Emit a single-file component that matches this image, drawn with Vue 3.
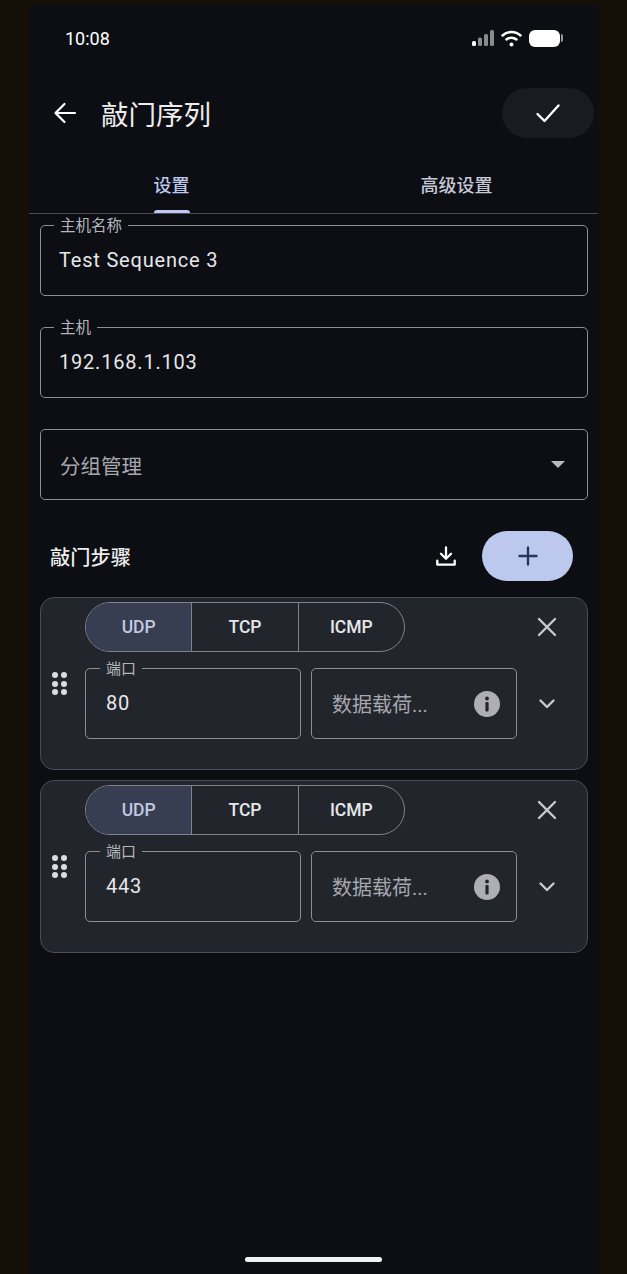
<script setup>
const steps = [
  { port: '80' },
  { port: '443' },
]
const protocols = ['UDP', 'TCP', 'ICMP']
</script>

<template>
  <div class="outer">
    <main class="screen">
      <div class="status">
        <span class="time">10:08</span>
        <div class="status-icons">
          <svg width="22" height="16" viewBox="0 0 22 16">
            <rect x="0" y="11" width="4" height="5" rx="1.500" fill="#fff" />
            <rect x="6" y="7.500" width="4" height="8.500" rx="1.500" fill="#8a8a8c" />
            <rect x="12" y="4" width="4" height="12" rx="1.500" fill="#8a8a8c" />
            <rect x="18" y="0" width="4" height="16" rx="1.500" fill="#8a8a8c" />
          </svg>
          <svg width="21" height="17" viewBox="0 0 21 17" fill="none" stroke="#fff" stroke-width="2.500" stroke-linecap="round">
            <path d="M1.500 5.500C6.500 .8 14.500 .8 19.500 5.500" />
            <path d="M5.500 9.500C8.300 7 12.700 7 15.500 9.500" />
            <circle cx="10.500" cy="14.500" r="2" fill="#fff" stroke="none" />
          </svg>
          <div class="battery"><span class="battery-body"></span><span class="battery-tip"></span></div>
        </div>
      </div>

      <header class="appbar">
        <button class="icon-btn back" aria-label="返回">
          <svg width="24" height="24" viewBox="0 0 24 24" fill="none" stroke="#fff" stroke-width="2.200" stroke-linecap="round" stroke-linejoin="round">
            <path d="M22 12H2.500M11.500 3 2.500 12l9 9" />
          </svg>
        </button>
        <h1>敲门序列</h1>
        <button class="save" aria-label="保存">
          <svg width="26" height="26" viewBox="0 0 26 26" fill="none" stroke="#fff" stroke-width="2.400" stroke-linecap="round" stroke-linejoin="round">
            <path d="M2.500 14 9.500 21 23.500 5.500" />
          </svg>
        </button>
      </header>

      <nav class="tabs">
        <div class="tab active"><span>设置</span></div>
        <div class="tab"><span>高级设置</span></div>
      </nav>

      <section class="form">
        <div class="field wide">
          <label>主机名称</label>
          <span class="value">Test Sequence 3</span>
        </div>
        <div class="field wide">
          <label>主机</label>
          <span class="value">192.168.1.103</span>
        </div>
        <div class="field wide select">
          <span class="placeholder">分组管理</span>
          <span class="caret"></span>
        </div>
      </section>

      <div class="steps-head">
        <h2>敲门步骤</h2>
        <svg class="download" width="22" height="22" viewBox="0 0 24 24" fill="none" stroke="#fff" stroke-width="2.500" stroke-linecap="round" stroke-linejoin="round">
          <path d="M12 2.500V14.500M6.500 9.500l5.500 5.500 5.500-5.500M2.500 17v4.500h19V17" />
        </svg>
        <button class="add" aria-label="添加">
          <svg width="20" height="20" viewBox="0 0 20 20" fill="none" stroke="#2b3557" stroke-width="2.400" stroke-linecap="round">
            <path d="M10 1.500V18.500M1.500 10H18.500" />
          </svg>
        </button>
      </div>

      <section class="cards">
        <article v-for="step in steps" :key="step.port" class="card">
          <div class="handle">
            <i v-for="n in 6" :key="n"></i>
          </div>
          <div class="card-main">
            <div class="top-row">
              <div class="segments">
                <span v-for="(p, i) in protocols" :key="p" class="segment" :class="{ on: i === 0 }">{{ p }}</span>
              </div>
              <svg class="close" width="22" height="22" viewBox="0 0 22 22" fill="none" stroke="#c9cad0" stroke-width="2.400" stroke-linecap="round">
                <path d="M3 3 19 19M19 3 3 19" />
              </svg>
            </div>
            <div class="bottom-row">
              <div class="field port">
                <label>端口</label>
                <span class="value">{{ step.port }}</span>
              </div>
              <div class="field payload">
                <span class="placeholder">数据载荷...</span>
                <svg class="info" width="26" height="26" viewBox="0 0 26 26">
                  <circle cx="13" cy="13" r="13" fill="#aeaeb4" />
                  <circle cx="13" cy="7.500" r="1.900" fill="#23252e" />
                  <rect x="11.400" y="11" width="3.200" height="9.500" rx="1" fill="#23252e" />
                </svg>
              </div>
              <svg class="chevron" width="18" height="12" viewBox="0 0 18 12" fill="none" stroke="#c9cad0" stroke-width="2.400" stroke-linecap="round" stroke-linejoin="round">
                <path d="M2.500 2.500 9 9l6.500-6.500" />
              </svg>
            </div>
          </div>
        </article>
      </section>

      <div class="home-bar"></div>
    </main>
  </div>
</template>

<style>
html, body { margin: 0; background: #141007; }
</style>

<style scoped>
.outer {
  width: 627px;
  height: 1274px;
  padding: 5px 29px 0;
  box-sizing: border-box;
  background: #141007;
  overflow: hidden;
  font-family: Roboto, "Noto Sans CJK SC", sans-serif;
}
.screen {
  position: relative;
  height: 1269px;
  background: #0c0e13;
  display: flex;
  flex-direction: column;
  color: #e4e5ea;
  --notch: #0c0e13;
}
.status {
  height: 66px;
  display: flex;
  align-items: center;
  justify-content: space-between;
  padding: 0 35px 0 36px;
}
.time { color: #fff; font-size: 18px; }
.status-icons { display: flex; align-items: center; gap: 7px; }
.battery { display: flex; align-items: center; gap: 1px; }
.battery-body { width: 31px; height: 17px; border-radius: 6px; background: #fff; }
.battery-tip { width: 2px; height: 8px; border-radius: 0 2px 2px 0; background: #9a9a9c; }

.appbar {
  height: 50px;
  margin-top: 17px;
  display: flex;
  align-items: center;
  padding: 0 4px 0 24px;
}
.icon-btn { background: none; border: 0; padding: 0; display: flex; }
h1 {
  margin: 0 0 0 24px;
  font-size: 27.500px;
  font-weight: 400;
  color: #eceded;
  flex: 1;
}
.save {
  width: 92px;
  height: 50px;
  border: 0;
  border-radius: 25px;
  background: #191b20;
  display: flex;
  align-items: center;
  justify-content: center;
}

.tabs {
  height: 76px;
  display: flex;
  border-bottom: 1px solid #4b4d56;
  box-sizing: border-box;
  margin-bottom: 11px;
}
.tab {
  flex: 0 0 285px;
  display: flex;
  justify-content: center;
  align-items: stretch;
  font-size: 18px;
  font-weight: 500;
  color: #c5c8d6;
}
.tab span { display: flex; align-items: center; padding-top: 16px; height: 59px; position: relative; }
.tab.active span { color: #bcc8ee; }
.tab.active span::after {
  content: "";
  position: absolute;
  left: 0;
  right: 0;
  bottom: 0;
  height: 3px;
  border-radius: 3px 3px 0 0;
  background: #bcc8ee;
}

.form { display: flex; flex-direction: column; gap: 31px; padding: 0 10px 0 11px; }
.field {
  position: relative;
  box-sizing: border-box;
  height: 71px;
  display: flex;
  align-items: center;
  padding: 0 20px;
  border: 1px solid #8d8f97;
  border-radius: 5px;
}
.wide { padding-left: 18px; }
.field label {
  position: absolute;
  top: -9px;
  left: 14px;
  padding: 0 6px;
  font-size: 15px;
  line-height: 18px;
  color: #b4b6bd;
  background: var(--notch);
}
.wide label { left: 13px; font-size: 15.500px; }
.value { font-size: 20px; letter-spacing: 0.800px; color: #e6e7ea; padding-bottom: 2px; }
.placeholder { font-size: 20px; color: #a6a8ae; white-space: nowrap; }
.select { justify-content: space-between; padding-right: 22px; padding-left: 19px; }
.select .placeholder { font-size: 20.500px; }
.caret {
  width: 0;
  height: 0;
  border-left: 7px solid transparent;
  border-right: 7px solid transparent;
  border-top: 7px solid #b8bac0;
}

.steps-head {
  height: 50px;
  margin-top: 31px;
  display: flex;
  align-items: center;
  padding: 0 25px 0 21px;
}
h2 { margin: 0; font-size: 20.250px; font-weight: 500; color: #eceded; flex: 1; }
.download { margin-right: 25px; }
.add {
  width: 91px;
  height: 50px;
  border: 0;
  padding: 0;
  border-radius: 25px;
  background: #bcc8ee;
  display: flex;
  align-items: center;
  justify-content: center;
}

.cards { margin-top: 16px; display: flex; flex-direction: column; gap: 10px; padding: 0 10px 0 11px; }
.card {
  box-sizing: border-box;
  height: 173px;
  display: flex;
  align-items: center;
  border: 1px solid #4a4c56;
  border-radius: 14px;
  background: #23252d;
  --notch: #23252d;
}
.handle {
  width: 15px;
  margin: 74px 18px 0 11px;
  display: grid;
  grid-template-columns: 6px 6px;
  gap: 2.500px 3px;
  align-self: flex-start;
}
.handle i { width: 6px; height: 6px; border-radius: 50%; background: #dcdde2; }
.card-main { flex: 1; align-self: flex-start; padding-top: 4px; }
.top-row { display: flex; align-items: center; height: 50px; }
.segments {
  box-sizing: border-box;
  width: 320px;
  height: 50px;
  display: flex;
  border: 1px solid #7f818b;
  border-radius: 25px;
  overflow: hidden;
}
.segment {
  flex: 1;
  display: flex;
  align-items: center;
  justify-content: center;
  font-size: 17.500px;
  font-weight: 500;
  color: #e6e7ea;
}
.segment + .segment { border-left: 1px solid #7f818b; }
.segment.on { background: #383e52; color: #c2c9e0; }
.close { margin-left: 131px; }
.bottom-row { display: flex; align-items: center; margin-top: 16px; }
.port { width: 216px; }
.payload { width: 206px; margin-left: 10px; justify-content: space-between; padding-right: 16px; }
.chevron { margin-left: 21px; }

.home-bar {
  position: absolute;
  left: 216px;
  bottom: 12px;
  width: 137px;
  height: 5px;
  border-radius: 3px;
  background: #f2f2f2;
}
</style>
